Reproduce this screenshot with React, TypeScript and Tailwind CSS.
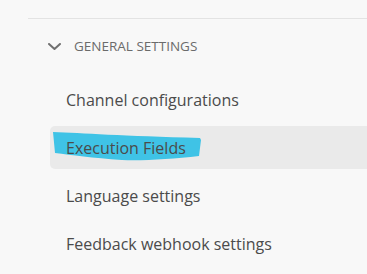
const items = [
  "Channel configurations",
  "Execution Fields",
  "Language settings",
  "Feedback webhook settings",
];

function Chevron() {
  return (
    <svg width="13" height="7" viewBox="0 0 13 7" className="shrink-0">
      <polyline
        points="1,1 6.5,6 12,1"
        fill="none"
        stroke="#707070"
        strokeWidth="2"
        strokeLinecap="round"
        strokeLinejoin="round"
      />
    </svg>
  );
}

// cyan marker scribble over the selected item
function Marker() {
  return (
    <svg
      className="absolute left-[2px] top-[5px]"
      width="152"
      height="30"
      viewBox="0 0 152 30"
    >
      <path
        d="M1 1 C 30 2, 70 5, 148 7 L 149 9 L 147 25 C 120 28, 90 30, 70 29 C 40 27, 20 24, 3 22 Z"
        fill="#3fc3e6"
      />
    </svg>
  );
}

export default function App() {
  return (
    <div
      className="h-[274px] w-full overflow-hidden bg-[#f8f8f8] pl-[28px] pt-[18px]"
      style={{ fontFamily: '"Open Sans", "Noto Sans", sans-serif' }}
    >
      <div className="border-t border-[#e3e3e3]">
        {/* ───── GROUP HEADER ───── */}
        <div className="flex h-[55px] items-center gap-[13px] pl-[20px]">
          <Chevron />
          <span className="text-[13.5px] uppercase text-[#6b6b6b]">
            General settings
          </span>
        </div>

        {/* ───── ITEMS ───── */}
        <div className="mt-[4px] flex flex-col gap-[5px] pl-[22px]">
          {items.map((label) => {
            const selected = label === "Execution Fields";
            return (
              <div
                key={label}
                className={
                  selected
                    ? "relative flex h-[43px] items-center rounded-l-[5px] bg-[#eaeaea] pl-[16px]"
                    : "relative flex h-[43px] items-center pl-[16px]"
                }
              >
                {selected && <Marker />}
                <span className="relative text-[16px] text-[#4b4b4b]">
                  {label}
                </span>
              </div>
            );
          })}
        </div>
      </div>
    </div>
  );
}
